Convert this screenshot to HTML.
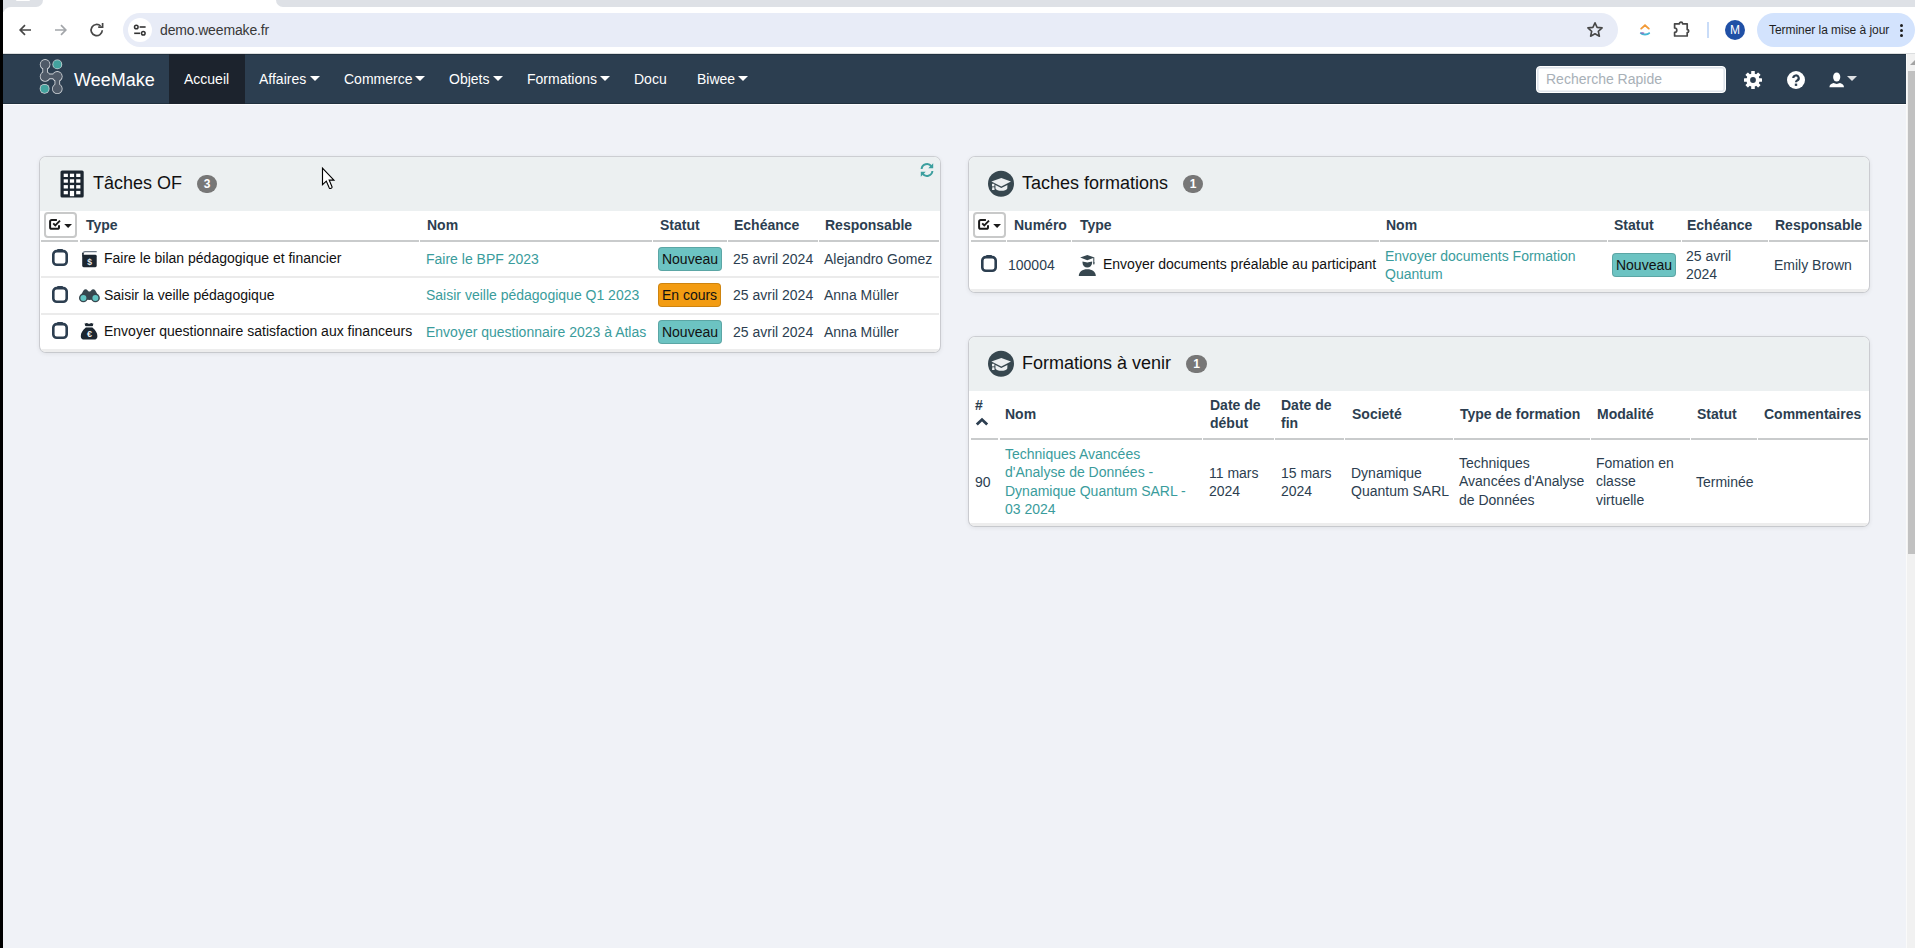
<!DOCTYPE html>
<html><head><meta charset="utf-8">
<style>
*{box-sizing:border-box;margin:0;padding:0}
html,body{width:1915px;height:948px;overflow:hidden;background:#f0f2f7;font-family:"Liberation Sans",sans-serif;position:relative}
.a{position:absolute;white-space:nowrap}
.t14{font-size:14px;line-height:16px}
.t18{font-size:18px;line-height:20px}
.nav{color:#fff}
.caret{position:absolute;width:0;height:0;border-left:5px solid transparent;border-right:5px solid transparent;border-top:5px solid #fff}
.panel{position:absolute;background:#fff;border-radius:6px;box-shadow:0 0 0 1px rgba(0,0,0,.12),0 1px 4px 1px rgba(0,0,0,.07);overflow:hidden}
.pfoot{position:absolute;left:0;bottom:0;width:100%;height:3px;background:#ededed}
.phead{position:absolute;left:0;top:0;width:100%;background:#ecf0f1}
.title{color:#111}
.badge{position:absolute;height:18px;border-radius:9px;background:#777;color:#fff;font-size:12px;font-weight:bold;text-align:center;line-height:18px}
.th{font-weight:bold;color:#2c3e50}
.td{color:#2c3e50}
.tb{color:#111}
.lk{color:#3a9c9c}
.hl{position:absolute;height:2px;background:#c9cbcc}
.rl{position:absolute;height:2px;background:#ebebeb}
.st{position:absolute;height:24px;border-radius:4px;font-size:14px;color:#111;line-height:24px;text-align:center;box-shadow:inset 0 0 0 1px rgba(0,0,0,.15)}
.nv{background:#6cc3c2}
.ec{background:#f39c12}
.dd{position:absolute;width:33px;height:26px;border:2px solid #c8c9c9;border-radius:4px;background:#fff}
svg{position:absolute;overflow:visible}
</style></head><body>

<!-- ===== Browser chrome ===== -->
<div class="a" style="left:0;top:0;width:1915px;height:54px;background:#fff"></div>
<div class="a" style="left:3px;top:0;width:40px;height:7px;background:#dee1e6;border-radius:0 0 8px 0"></div>
<div class="a" style="left:276px;top:0;width:1639px;height:7px;background:#dee1e6;border-radius:0 0 0 8px"></div>
<div class="a" style="left:16px;top:0;width:14px;height:1px;background:#fff;border-radius:0 0 4px 4px"></div>
<div class="a" style="left:3px;top:6px;width:8px;height:6px;background:#dee1e6"></div><div class="a" style="left:3px;top:7px;width:16px;height:16px;background:#fff;border-radius:8px 0 0 0"></div>

<!-- back / fwd / reload -->
<svg style="left:17px;top:22px" width="16" height="16" viewBox="0 0 16 16"><path d="M14 8H3.2M8 3.2L3.2 8 8 12.8" fill="none" stroke="#474747" stroke-width="1.7"/></svg>
<svg style="left:53px;top:22px" width="16" height="16" viewBox="0 0 16 16"><path d="M2 8h10.8M8 3.2L12.8 8 8 12.8" fill="none" stroke="#a3a6aa" stroke-width="1.7"/></svg>
<svg style="left:89px;top:22px" width="16" height="16" viewBox="0 0 16 16"><path d="M13.3 8.3A5.6 5.6 0 1 1 11.6 4" fill="none" stroke="#474747" stroke-width="1.7"/><path d="M9.2 5.2h4.4V0.9" fill="none" stroke="#474747" stroke-width="1.7"/></svg>

<div class="a" style="left:123px;top:13px;width:1495px;height:34px;border-radius:17px;background:#e8ecf7"></div>
<div class="a" style="left:128px;top:18px;width:24px;height:24px;border-radius:12px;background:#fff"></div>
<svg style="left:132px;top:22px" width="16" height="16" viewBox="0 0 16 16"><circle cx="4.3" cy="5" r="1.8" fill="none" stroke="#333" stroke-width="1.5"/><path d="M7.6 5h6" stroke="#333" stroke-width="1.6"/><circle cx="11.3" cy="11.3" r="1.8" fill="none" stroke="#333" stroke-width="1.5"/><path d="M2.2 11.3h6" stroke="#333" stroke-width="1.6"/></svg>
<div class="a" style="left:160px;top:22px;font-size:14px;line-height:16px;color:#383838;letter-spacing:-0.15px">demo.weemake.fr</div>

<svg style="left:1586px;top:21px" width="18" height="17" viewBox="0 0 18 17"><path d="M9 1.8l2.1 4.6 5 .5-3.8 3.4 1.1 4.9L9 12.7l-4.4 2.5 1.1-4.9L1.9 6.9l5-.5z" fill="none" stroke="#474747" stroke-width="1.6" stroke-linejoin="round"/></svg>
<svg style="left:1639px;top:23px" width="12" height="14" viewBox="0 0 12 14"><path d="M2.2 5.6L6 2.2 9.8 5.6" fill="none" stroke="#f29a38" stroke-width="1.9" stroke-linecap="round"/><path d="M1.8 10.2c1.6 1.7 6.8 1.7 8.4 0" fill="none" stroke="#45b6d4" stroke-width="1.9" stroke-linecap="round"/><path d="M1.8 10.2c1.2-.5 2.2-.5 3.4 0" fill="none" stroke="#8b62b8" stroke-width="1.2"/></svg>
<svg style="left:1673px;top:20px" width="18" height="18" viewBox="0 0 18 18"><path d="M1.6 3.8h4.8a1.6 1.6 0 0 1 3.2 0h4.6v5.8a1.5 1.5 0 0 1 0 3V16H1.6v-3.6a2.2 2.2 0 0 0 0-4.4z" fill="none" stroke="#474747" stroke-width="1.7" stroke-linejoin="round"/></svg>
<div class="a" style="left:1707px;top:22px;width:2px;height:16px;background:#c9dcf8"></div>
<div class="a" style="left:1725px;top:20px;width:20px;height:20px;border-radius:10px;background:#2050a6;color:#fff;font-size:12px;line-height:20px;text-align:center">M</div>
<div class="a" style="left:1757px;top:13px;width:158px;height:34px;border-radius:17px;background:#d3e3fd"></div>
<div class="a" style="left:1769px;top:23px;font-size:12px;line-height:14px;color:#1f1f1f;letter-spacing:-0.05px">Terminer la mise à jour</div>
<div class="a" style="left:1899.5px;top:23.5px;width:3.4px;height:3.4px;border-radius:2px;background:#1f1f1f"></div>
<div class="a" style="left:1899.5px;top:28.5px;width:3.4px;height:3.4px;border-radius:2px;background:#1f1f1f"></div>
<div class="a" style="left:1899.5px;top:33.5px;width:3.4px;height:3.4px;border-radius:2px;background:#1f1f1f"></div>

<!-- left black border -->
<div class="a" style="left:0;top:0;width:3px;height:948px;background:#000;z-index:9"></div>

<!-- ===== Navbar ===== -->
<div class="a" style="left:3px;top:54px;width:1903px;height:50px;background:#2c3e50;border-top:1px solid #21313f;border-bottom:1px solid #21313f"></div>
<div class="a" style="left:3px;top:104px;width:1903px;height:1px;background:#fdfdfe"></div>
<div class="a" style="left:3px;top:53px;width:1912px;height:1px;background:#dcdedf"></div>
<svg style="left:34px;top:56px" width="34" height="42" viewBox="0 0 34 42">
  <g stroke="#d0d4d8" stroke-linecap="round" fill="none">
    <path d="M11.1 8.4L11.1 20.4L23.3 20.4L23.3 32.8" stroke-width="5.6"/>
  </g>
  <g fill="#d0d4d8"><circle cx="11.1" cy="8.4" r="5.3"/><circle cx="11.1" cy="20.4" r="5.3"/><circle cx="23.3" cy="20.4" r="5.3"/><circle cx="23.3" cy="32.8" r="5.3"/><circle cx="23.3" cy="8.4" r="4.9"/><circle cx="10.6" cy="32.8" r="4.9"/></g>
  <g stroke="#4f5a68" stroke-linecap="round" fill="none">
    <path d="M11.1 8.4L11.1 20.4L23.3 20.4L23.3 32.8" stroke-width="3.8"/>
  </g>
  <g fill="#4f5a68"><circle cx="11.1" cy="8.4" r="4.5"/><circle cx="11.1" cy="20.4" r="4.5"/><circle cx="23.3" cy="20.4" r="4.5"/><circle cx="23.3" cy="32.8" r="4.5"/></g>
  <g fill="#43a29e"><circle cx="23.3" cy="8.4" r="4.1"/><circle cx="10.6" cy="32.8" r="4.1"/></g>
</svg>
<div class="a nav" style="left:74px;top:70px;font-size:18px;line-height:20px">WeeMake</div>
<div class="a" style="left:169px;top:54px;width:76px;height:50px;background:#1c232d"></div>
<div class="a nav t14" style="left:184px;top:71px">Accueil</div>
<div class="a nav t14" style="left:259px;top:71px">Affaires</div><div class="caret" style="left:310px;top:76px"></div>
<div class="a nav t14" style="left:344px;top:71px">Commerce</div><div class="caret" style="left:415px;top:76px"></div>
<div class="a nav t14" style="left:449px;top:71px">Objets</div><div class="caret" style="left:493px;top:76px"></div>
<div class="a nav t14" style="left:527px;top:71px">Formations</div><div class="caret" style="left:600px;top:76px"></div>
<div class="a nav t14" style="left:634px;top:71px">Docu</div>
<div class="a nav t14" style="left:697px;top:71px">Biwee</div><div class="caret" style="left:738px;top:76px"></div>

<div class="a" style="left:1536px;top:66px;width:190px;height:27px;border-radius:4px;background:#fff;border:1px solid #fff;box-shadow:inset 0 0 0 1.6px #e0e5ec"></div>
<div class="a t14" style="left:1546px;top:71px;color:#a8b0b7">Recherche Rapide</div>
<!-- gear -->
<svg style="left:1743px;top:70px" width="20" height="20" viewBox="0 0 20 20"><g fill="#fff" transform="translate(10 10)">
 <circle r="6.6"/>
 <rect x="-1.8" y="-9" width="3.6" height="18" rx=".5"/>
 <rect x="-1.8" y="-9" width="3.6" height="18" rx=".5" transform="rotate(45)"/>
 <rect x="-1.8" y="-9" width="3.6" height="18" rx=".5" transform="rotate(90)"/>
 <rect x="-1.8" y="-9" width="3.6" height="18" rx=".5" transform="rotate(135)"/>
</g><circle cx="10" cy="10" r="2.9" fill="#2c3e50"/></svg>
<!-- help -->
<svg style="left:1787px;top:71px" width="18" height="18" viewBox="0 0 18 18"><circle cx="9" cy="9" r="9" fill="#fff"/><path d="M6.3 7.1a2.7 2.6 0 1 1 3.9 2.3c-.9.5-1.2.9-1.2 1.8" fill="none" stroke="#2c3e50" stroke-width="2.2"/><rect x="7.8" y="12.6" width="2.4" height="2.3" fill="#2c3e50"/></svg>
<!-- user -->
<svg style="left:1829px;top:72px" width="16" height="16" viewBox="0 0 16 16"><ellipse cx="7.7" cy="5" rx="3.6" ry="4.6" fill="#fff"/><path d="M0.4 15.2c.3-2.4 1.4-3.3 4-4.1l3.3 1 3.3-1c2.6.8 3.7 1.7 4 4.1z" fill="#fff"/></svg>
<div class="caret" style="left:1847px;top:76px;border-top-color:#dde0e3"></div>

<!-- scrollbar -->
<div class="a" style="left:1906px;top:54px;width:9px;height:894px;background:#f1f1f1"></div>
<div class="a" style="left:1906px;top:54px;width:1px;height:894px;background:#fafafa"></div>
<div class="a" style="left:1908px;top:71px;width:7px;height:483px;background:#c1c1c1"></div>
<svg style="left:1910px;top:60px" width="5" height="5" viewBox="0 0 5 5"><path d="M0 5L5 0V5z" fill="#a3a3a3"/></svg>

<!-- ===== Panel 1 : Tâches OF ===== -->
<div class="panel" style="left:40px;top:157px;width:900px;height:195px"><div class="phead" style="height:54px"></div><div class="pfoot"></div></div>
<svg style="left:55px;top:165px" width="35" height="37" viewBox="0 0 35 37">
 <rect x="5.5" y="5.5" width="23.2" height="27" rx="1.6" fill="#1c2630"/>
 <g fill="#fff">
  <rect x="8.7" y="8.7" width="4.2" height="3.3"/><rect x="14.9" y="8.7" width="4.2" height="3.3"/><rect x="21.2" y="8.7" width="4.2" height="3.3"/>
  <rect x="8.7" y="14.3" width="4.2" height="3.4"/><rect x="14.9" y="14.3" width="4.2" height="3.4"/><rect x="21.2" y="14.3" width="4.2" height="3.4"/>
  <rect x="8.7" y="20.1" width="4.2" height="3.4"/><rect x="14.9" y="20.1" width="4.2" height="3.4"/><rect x="21.2" y="20.1" width="4.2" height="3.4"/>
  <rect x="8.7" y="25.9" width="4.2" height="3.4"/><rect x="14.9" y="25.9" width="4.2" height="5.3"/><rect x="21.2" y="25.9" width="4.2" height="3.4"/>
 </g>
</svg>
<div class="a t18 title" style="left:93px;top:173px">Tâches OF</div>
<div class="badge" style="left:197px;top:175px;width:20px">3</div>
<svg style="left:919px;top:162px" width="16" height="16" viewBox="0 0 16 16"><path d="M2.6 7A5.4 5.4 0 0 1 12.4 4.4M13.4 9A5.4 5.4 0 0 1 3.6 11.6" fill="none" stroke="#3c9f9f" stroke-width="2"/><path d="M14.2 1.3v4.9H9.3z M1.8 14.7V9.8h4.9z" fill="#3c9f9f"/></svg>

<div class="dd" style="left:44px;top:212px"></div>
<svg style="left:48px;top:217px" width="26" height="16" viewBox="0 0 26 16"><path d="M8.9 3H3.7a1.6 1.6 0 0 0-1.6 1.6v5.6a1.6 1.6 0 0 0 1.6 1.6h5.7a1.6 1.6 0 0 0 1.6-1.6V8.2" fill="none" stroke="#1a1a1a" stroke-width="2"/><path d="M5.2 6.4L7.3 8.5 12 3.7" fill="none" stroke="#1a1a1a" stroke-width="1.9"/><path d="M16.2 6.9h7.8l-3.9 4z" fill="#1a1a1a"/></svg>
<div class="a t14 th" style="left:86px;top:217px">Type</div>
<div class="a t14 th" style="left:427px;top:217px">Nom</div>
<div class="a t14 th" style="left:660px;top:217px">Statut</div>
<div class="a t14 th" style="left:734px;top:217px">Echéance</div>
<div class="a t14 th" style="left:825px;top:217px">Responsable</div>
<div class="hl" style="left:41px;top:240px;width:37px"></div>
<div class="hl" style="left:80px;top:240px;width:339px"></div>
<div class="hl" style="left:420px;top:240px;width:232px"></div>
<div class="hl" style="left:653px;top:240px;width:74px"></div>
<div class="hl" style="left:728px;top:240px;width:90px"></div>
<div class="hl" style="left:819px;top:240px;width:120px"></div>
<div class="rl" style="left:41px;top:276px;width:898px"></div>
<div class="rl" style="left:41px;top:313px;width:898px"></div>

<!-- checkboxes -->
<svg style="left:51px;top:248px" width="18" height="19" viewBox="0 0 18 19"><rect x="2.3" y="3.1" width="13.4" height="13.7" rx="3.4" fill="none" stroke="#2c3e50" stroke-width="2.6"/><rect x="6.1" y="0.9" width="5.9" height="2.4" rx=".9" fill="#2c3e50"/></svg>
<svg style="left:51px;top:285px" width="18" height="19" viewBox="0 0 18 19"><rect x="2.3" y="3.1" width="13.4" height="13.7" rx="3.4" fill="none" stroke="#2c3e50" stroke-width="2.6"/><rect x="6.1" y="0.9" width="5.9" height="2.4" rx=".9" fill="#2c3e50"/></svg>
<svg style="left:51px;top:321px" width="18" height="19" viewBox="0 0 18 19"><rect x="2.3" y="3.1" width="13.4" height="13.7" rx="3.4" fill="none" stroke="#2c3e50" stroke-width="2.6"/><rect x="6.1" y="0.9" width="5.9" height="2.4" rx=".9" fill="#2c3e50"/></svg>

<!-- row icons -->
<svg style="left:80px;top:249px" width="20" height="20" viewBox="0 0 20 20"><path d="M2.5 5.5a2.8 2.8 0 0 1 2.8-2.8h11.4" fill="none" stroke="#6e7a86" stroke-width="1.3"/><rect x="2.2" y="5.8" width="14.5" height="12.4" rx="1.4" fill="#1c2630"/><rect x="2.2" y="4" width="1.5" height="3" fill="#1c2630"/><text x="9.6" y="15.6" font-size="8.5" font-weight="bold" fill="#e6e9ec" text-anchor="middle" font-family="Liberation Sans">$</text></svg>
<svg style="left:78px;top:287px" width="24" height="18" viewBox="0 0 24 18"><path d="M1.2 11.6L5.3 3.7Q7.6 0.9 9.9 3.7L10.7 4.4H12.1L12.9 3.7Q15.2 0.9 17.5 3.7L21.6 11.6L11.4 12.9z" fill="#37474f"/><circle cx="5.4" cy="10.9" r="4.4" fill="#37474f"/><circle cx="17.4" cy="10.9" r="4.4" fill="#37474f"/><circle cx="5.4" cy="10.9" r="3" fill="#62c4c2"/><circle cx="17.4" cy="10.9" r="3" fill="#62c4c2"/></svg>
<svg style="left:79px;top:321px" width="20" height="21" viewBox="0 0 20 21"><path d="M5.5 2.2c1 .6 1.7-.4 2.5-.2.8.2 1.2.8 2 .8s1.5-.9 2.4-.8c.8.1 1.2 1 2 .5l-.6 2.6H6.3z" fill="#1c2630"/><rect x="6.8" y="5.2" width="6.6" height="1.3" fill="#c8ccd0"/><path d="M6.8 6.6h6.6c3.2 2.6 5 5.6 5 8.6 0 2.2-1.3 3.4-3.6 3.4H5.4c-2.3 0-3.6-1.2-3.6-3.4 0-3 1.8-6 5-8.6z" fill="#1c2630"/><text x="10.4" y="16.4" font-size="9" font-weight="bold" fill="#f4f4f4" text-anchor="middle" font-family="Liberation Sans">€</text></svg>

<div class="a t14 tb" style="left:104px;top:250px">Faire le bilan pédagogique et financier</div>
<div class="a t14 tb" style="left:104px;top:287px">Saisir la veille pédagogique</div>
<div class="a t14 tb" style="left:104px;top:323px">Envoyer questionnaire satisfaction aux financeurs</div>
<div class="a t14 lk" style="left:426px;top:251px">Faire le BPF 2023</div>
<div class="a t14 lk" style="left:426px;top:287px">Saisir veille pédagogique Q1 2023</div>
<div class="a t14 lk" style="left:426px;top:324px">Envoyer questionnaire 2023 à Atlas</div>
<div class="st nv" style="left:658px;top:247px;width:64px">Nouveau</div>
<div class="st ec" style="left:658px;top:283px;width:63px">En cours</div>
<div class="st nv" style="left:658px;top:320px;width:64px">Nouveau</div>
<div class="a t14 td" style="left:733px;top:251px">25 avril 2024</div>
<div class="a t14 td" style="left:733px;top:287px">25 avril 2024</div>
<div class="a t14 td" style="left:733px;top:324px">25 avril 2024</div>
<div class="a t14 td" style="left:824px;top:251px">Alejandro Gomez</div>
<div class="a t14 td" style="left:824px;top:287px">Anna Müller</div>
<div class="a t14 td" style="left:824px;top:324px">Anna Müller</div>

<!-- ===== Panel 2 : Taches formations ===== -->
<div class="panel" style="left:969px;top:157px;width:900px;height:135px"><div class="phead" style="height:54px"></div><div class="pfoot"></div></div>
<svg style="left:982px;top:165px" width="38" height="37" viewBox="0 0 38 37" id="gc1">
 <circle cx="19" cy="18.8" r="13" fill="#37474f"/>
 <path d="M9.4 16.4L19.3 13 29 16.4 19.3 21.4z" fill="#eceff1"/>
 <path d="M13.4 19.9L19.3 22.9 25.4 19.9 25.3 23.4C24.2 26.6 14.6 26.6 13.5 23.4z" fill="#eceff1"/>
 <rect x="10" y="18.8" width="2.4" height="2.6" fill="#eceff1"/><path d="M10 25h2.6l-.3-2.8h-2z" fill="#eceff1"/>
</svg>
<div class="a t18 title" style="left:1022px;top:173px">Taches formations</div>
<div class="badge" style="left:1183px;top:175px;width:20px">1</div>

<div class="dd" style="left:973px;top:212px"></div>
<svg style="left:977px;top:217px" width="26" height="16" viewBox="0 0 26 16"><path d="M8.9 3H3.7a1.6 1.6 0 0 0-1.6 1.6v5.6a1.6 1.6 0 0 0 1.6 1.6h5.7a1.6 1.6 0 0 0 1.6-1.6V8.2" fill="none" stroke="#1a1a1a" stroke-width="2"/><path d="M5.2 6.4L7.3 8.5 12 3.7" fill="none" stroke="#1a1a1a" stroke-width="1.9"/><path d="M16.2 6.9h7.8l-3.9 4z" fill="#1a1a1a"/></svg>
<div class="a t14 th" style="left:1014px;top:217px">Numéro</div>
<div class="a t14 th" style="left:1080px;top:217px">Type</div>
<div class="a t14 th" style="left:1386px;top:217px">Nom</div>
<div class="a t14 th" style="left:1614px;top:217px">Statut</div>
<div class="a t14 th" style="left:1687px;top:217px">Echéance</div>
<div class="a t14 th" style="left:1775px;top:217px">Responsable</div>
<div class="hl" style="left:971px;top:240px;width:35px"></div>
<div class="hl" style="left:1007px;top:240px;width:64px"></div>
<div class="hl" style="left:1072px;top:240px;width:307px"></div>
<div class="hl" style="left:1380px;top:240px;width:227px"></div>
<div class="hl" style="left:1608px;top:240px;width:73px"></div>
<div class="hl" style="left:1682px;top:240px;width:86px"></div>
<div class="hl" style="left:1769px;top:240px;width:99px"></div>

<svg style="left:980px;top:254px" width="18" height="19" viewBox="0 0 18 19"><rect x="2.3" y="3.1" width="13.4" height="13.7" rx="3.4" fill="none" stroke="#2c3e50" stroke-width="2.6"/><rect x="6.1" y="0.9" width="5.9" height="2.4" rx=".9" fill="#2c3e50"/></svg>
<div class="a t14" style="left:1008px;top:257px;color:#2c3e50">100004</div>
<svg style="left:1077px;top:254px" width="21" height="23" viewBox="0 0 21 23">
 <path d="M3.2 3.6L10.3 0.9 17.5 3.6 10.3 6.3z" fill="#37474f"/>
 <path d="M16.8 3.6v5" stroke="#37474f" stroke-width="1"/><rect x="16.2" y="8" width="1.3" height="2.4" rx=".4" fill="#37474f"/>
 <path d="M5.5 7.4l4.8 1.1 4.8-1.1v1.4a4.8 4.8 0 0 1-9.6 0z" fill="#37474f"/>
 <path d="M1.8 21.9c0-4 3.6-6.7 8.5-6.7s8.5 2.7 8.5 6.7z" fill="#37474f"/>
</svg>
<div class="a t14 tb" style="left:1103px;top:256px">Envoyer documents préalable au participant</div>
<div class="a lk" style="left:1385px;top:247px;font-size:14px;line-height:18px">Envoyer documents Formation<br>Quantum</div>
<div class="st nv" style="left:1612px;top:253px;width:64px">Nouveau</div>
<div class="a td" style="left:1686px;top:247px;font-size:14px;line-height:18px">25 avril<br>2024</div>
<div class="a t14 td" style="left:1774px;top:257px">Emily Brown</div>

<!-- ===== Panel 3 : Formations à venir ===== -->
<div class="panel" style="left:969px;top:337px;width:900px;height:189px"><div class="phead" style="height:54px"></div><div class="pfoot"></div></div>
<svg style="left:982px;top:345px" width="38" height="37" viewBox="0 0 38 37">
 <circle cx="19" cy="18.8" r="13" fill="#37474f"/>
 <path d="M9.4 16.4L19.3 13 29 16.4 19.3 21.4z" fill="#eceff1"/>
 <path d="M13.4 19.9L19.3 22.9 25.4 19.9 25.3 23.4C24.2 26.6 14.6 26.6 13.5 23.4z" fill="#eceff1"/>
 <rect x="10" y="18.8" width="2.4" height="2.6" fill="#eceff1"/><path d="M10 25h2.6l-.3-2.8h-2z" fill="#eceff1"/>
</svg>
<div class="a t18 title" style="left:1022px;top:353px">Formations à venir</div>
<div class="badge" style="left:1186px;top:355px;width:21px">1</div>

<div class="a t14 th" style="left:975px;top:397px">#</div>
<svg style="left:975px;top:416px" width="14" height="11" viewBox="0 0 14 11"><path d="M1.8 8.6L7 3.6l5.2 5" fill="none" stroke="#2c3e50" stroke-width="2.8"/></svg>
<div class="a t14 th" style="left:1005px;top:406px">Nom</div>
<div class="a th" style="left:1210px;top:396px;font-size:14px;line-height:18px">Date de<br>début</div>
<div class="a th" style="left:1281px;top:396px;font-size:14px;line-height:18px">Date de<br>fin</div>
<div class="a t14 th" style="left:1352px;top:406px">Societé</div>
<div class="a t14 th" style="left:1460px;top:406px">Type de formation</div>
<div class="a t14 th" style="left:1597px;top:406px">Modalité</div>
<div class="a t14 th" style="left:1697px;top:406px">Statut</div>
<div class="a t14 th" style="left:1764px;top:406px">Commentaires</div>
<div class="hl" style="left:971px;top:438px;width:27px"></div>
<div class="hl" style="left:1000px;top:438px;width:202px"></div>
<div class="hl" style="left:1203px;top:438px;width:71px"></div>
<div class="hl" style="left:1275px;top:438px;width:69px"></div>
<div class="hl" style="left:1345px;top:438px;width:108px"></div>
<div class="hl" style="left:1454px;top:438px;width:136px"></div>
<div class="hl" style="left:1591px;top:438px;width:99px"></div>
<div class="hl" style="left:1691px;top:438px;width:66px"></div>
<div class="hl" style="left:1758px;top:438px;width:110px"></div>

<div class="a t14 td" style="left:975px;top:474px">90</div>
<div class="a lk" style="left:1005px;top:445px;font-size:14px;line-height:18.3px">Techniques Avancées<br>d'Analyse de Données -<br>Dynamique Quantum SARL -<br>03 2024</div>
<div class="a td" style="left:1209px;top:464px;font-size:14px;line-height:18px">11 mars<br>2024</div>
<div class="a td" style="left:1281px;top:464px;font-size:14px;line-height:18px">15 mars<br>2024</div>
<div class="a td" style="left:1351px;top:464px;font-size:14px;line-height:18px">Dynamique<br>Quantum SARL</div>
<div class="a td" style="left:1459px;top:454px;font-size:14px;line-height:18.4px">Techniques<br>Avancées d'Analyse<br>de Données</div>
<div class="a td" style="left:1596px;top:454px;font-size:14px;line-height:18.4px">Fomation en<br>classe<br>virtuelle</div>
<div class="a t14 td" style="left:1696px;top:474px">Terminée</div>

<!-- mouse cursor -->
<svg style="left:321px;top:166px" width="16" height="26" viewBox="0 0 16 26"><path d="M1.5 2.2V18.6L5.3 15.1 8.3 21.9Q8.7 22.7 9.5 22.4L10.6 21.9Q11.3 21.5 11 20.8L8.2 14.1H12.9Z" fill="#fff" stroke="#000" stroke-width="1.15" stroke-linejoin="miter"/></svg>
</body></html>
